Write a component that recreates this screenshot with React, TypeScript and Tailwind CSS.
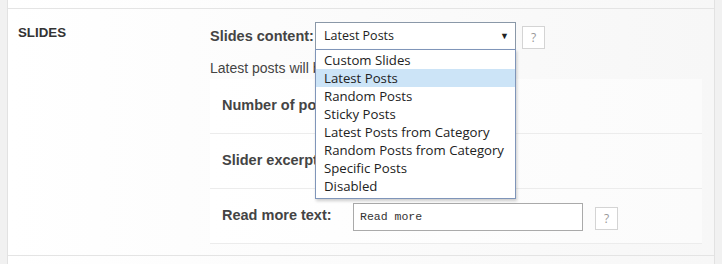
import React from 'react';

const options = [
  'Custom Slides',
  'Latest Posts',
  'Random Posts',
  'Sticky Posts',
  'Latest Posts from Category',
  'Random Posts from Category',
  'Specific Posts',
  'Disabled',
];

const HelpButton = () => (
  <div className="w-[23px] h-[23px] border border-[#d4d4d4] bg-white flex items-center justify-center text-[12px] text-[#999] font-['Open_Sans',sans-serif]">
    ?
  </div>
);

// label cut off where the open dropdown covers it
const Row = ({ label, clip, children }: { label: string; clip?: boolean; children?: React.ReactNode }) => (
  <div className="h-[55px] border-b border-[#ececec] flex items-start pl-[12px] pt-[14px]">
    <div
      className={`pt-[1px] text-[14.5px] font-bold text-[#444] leading-[22px] whitespace-nowrap ${
        clip ? 'w-[93px] overflow-hidden' : 'w-[131px]'
      }`}
    >
      {label}
    </div>
    {children}
  </div>
);

export default function App() {
  return (
    <div className="w-[722px] h-[264px] bg-[#f1f1f1] overflow-hidden font-['Liberation_Sans',Arial,sans-serif]">
      <div className="ml-[7px] w-[708px] h-[264px] border-x border-[#e2e2e2] bg-gradient-to-r from-white to-[#f7f7f7]">
        <div className="h-[8px]" />
        <div className="h-[248px] border-y border-[#e4e4e4] flex">
          {/* left column */}
          <div className="w-[202px] pl-[10px] pt-[16px] text-[13.3px] font-bold text-[#333] leading-[16px]">SLIDES</div>

          {/* right column */}
          <div className="w-[492px] relative">
            <div className="flex items-start pt-[13px]">
              <div className="text-[14.5px] font-bold text-[#444] leading-[20px] pt-[4px] w-[105px]">Slides content:</div>
              <div className="w-[201px] h-[28px] border border-[#8a98a8] bg-white flex items-center justify-between pl-[8px] pr-[6px] text-[12.5px] text-[#222] font-['Open_Sans',sans-serif]">
                <span>Latest Posts</span>
                <span className="text-[9px] text-[#222]">▼</span>
              </div>
              <div className="ml-[6px] mt-[4px]">
                <HelpButton />
              </div>
            </div>
            <div className="w-[105px] overflow-hidden whitespace-nowrap text-[14px] text-[#444] leading-[18px] mt-[9px]">
              Latest posts will be displayed
            </div>

            <div className="mt-[2px] w-[492px] bg-gradient-to-r from-white to-[#fbfbfb]">
              <Row label="Number of posts:" clip />
              <Row label="Slider excerpt:" clip />
              <Row label="Read more text:">
                <div className="w-[230px] h-[28px] border border-[#aaa] bg-white flex items-center pl-[6px] text-[11.5px] text-[#333] font-['Liberation_Mono',monospace]">
                  Read more
                </div>
                <div className="ml-[12px] mt-[4px]">
                  <HelpButton />
                </div>
              </Row>
            </div>

            {/* open dropdown list */}
            <div className="absolute left-[105px] top-[40px] w-[201px] bg-white border border-[#7f95b9] shadow-[1px_2px_3px_rgba(0,0,0,0.2)] pt-[1px] pb-[3px] font-['Open_Sans',sans-serif] text-[13.2px] text-[#222]">
              {options.map((o) => (
                <div
                  key={o}
                  className={`h-[18px] leading-[18px] pl-[8px] whitespace-nowrap ${o === 'Latest Posts' ? 'bg-[#cce4f7]' : ''}`}
                >
                  {o}
                </div>
              ))}
            </div>
          </div>
        </div>
      </div>
    </div>
  );
}
